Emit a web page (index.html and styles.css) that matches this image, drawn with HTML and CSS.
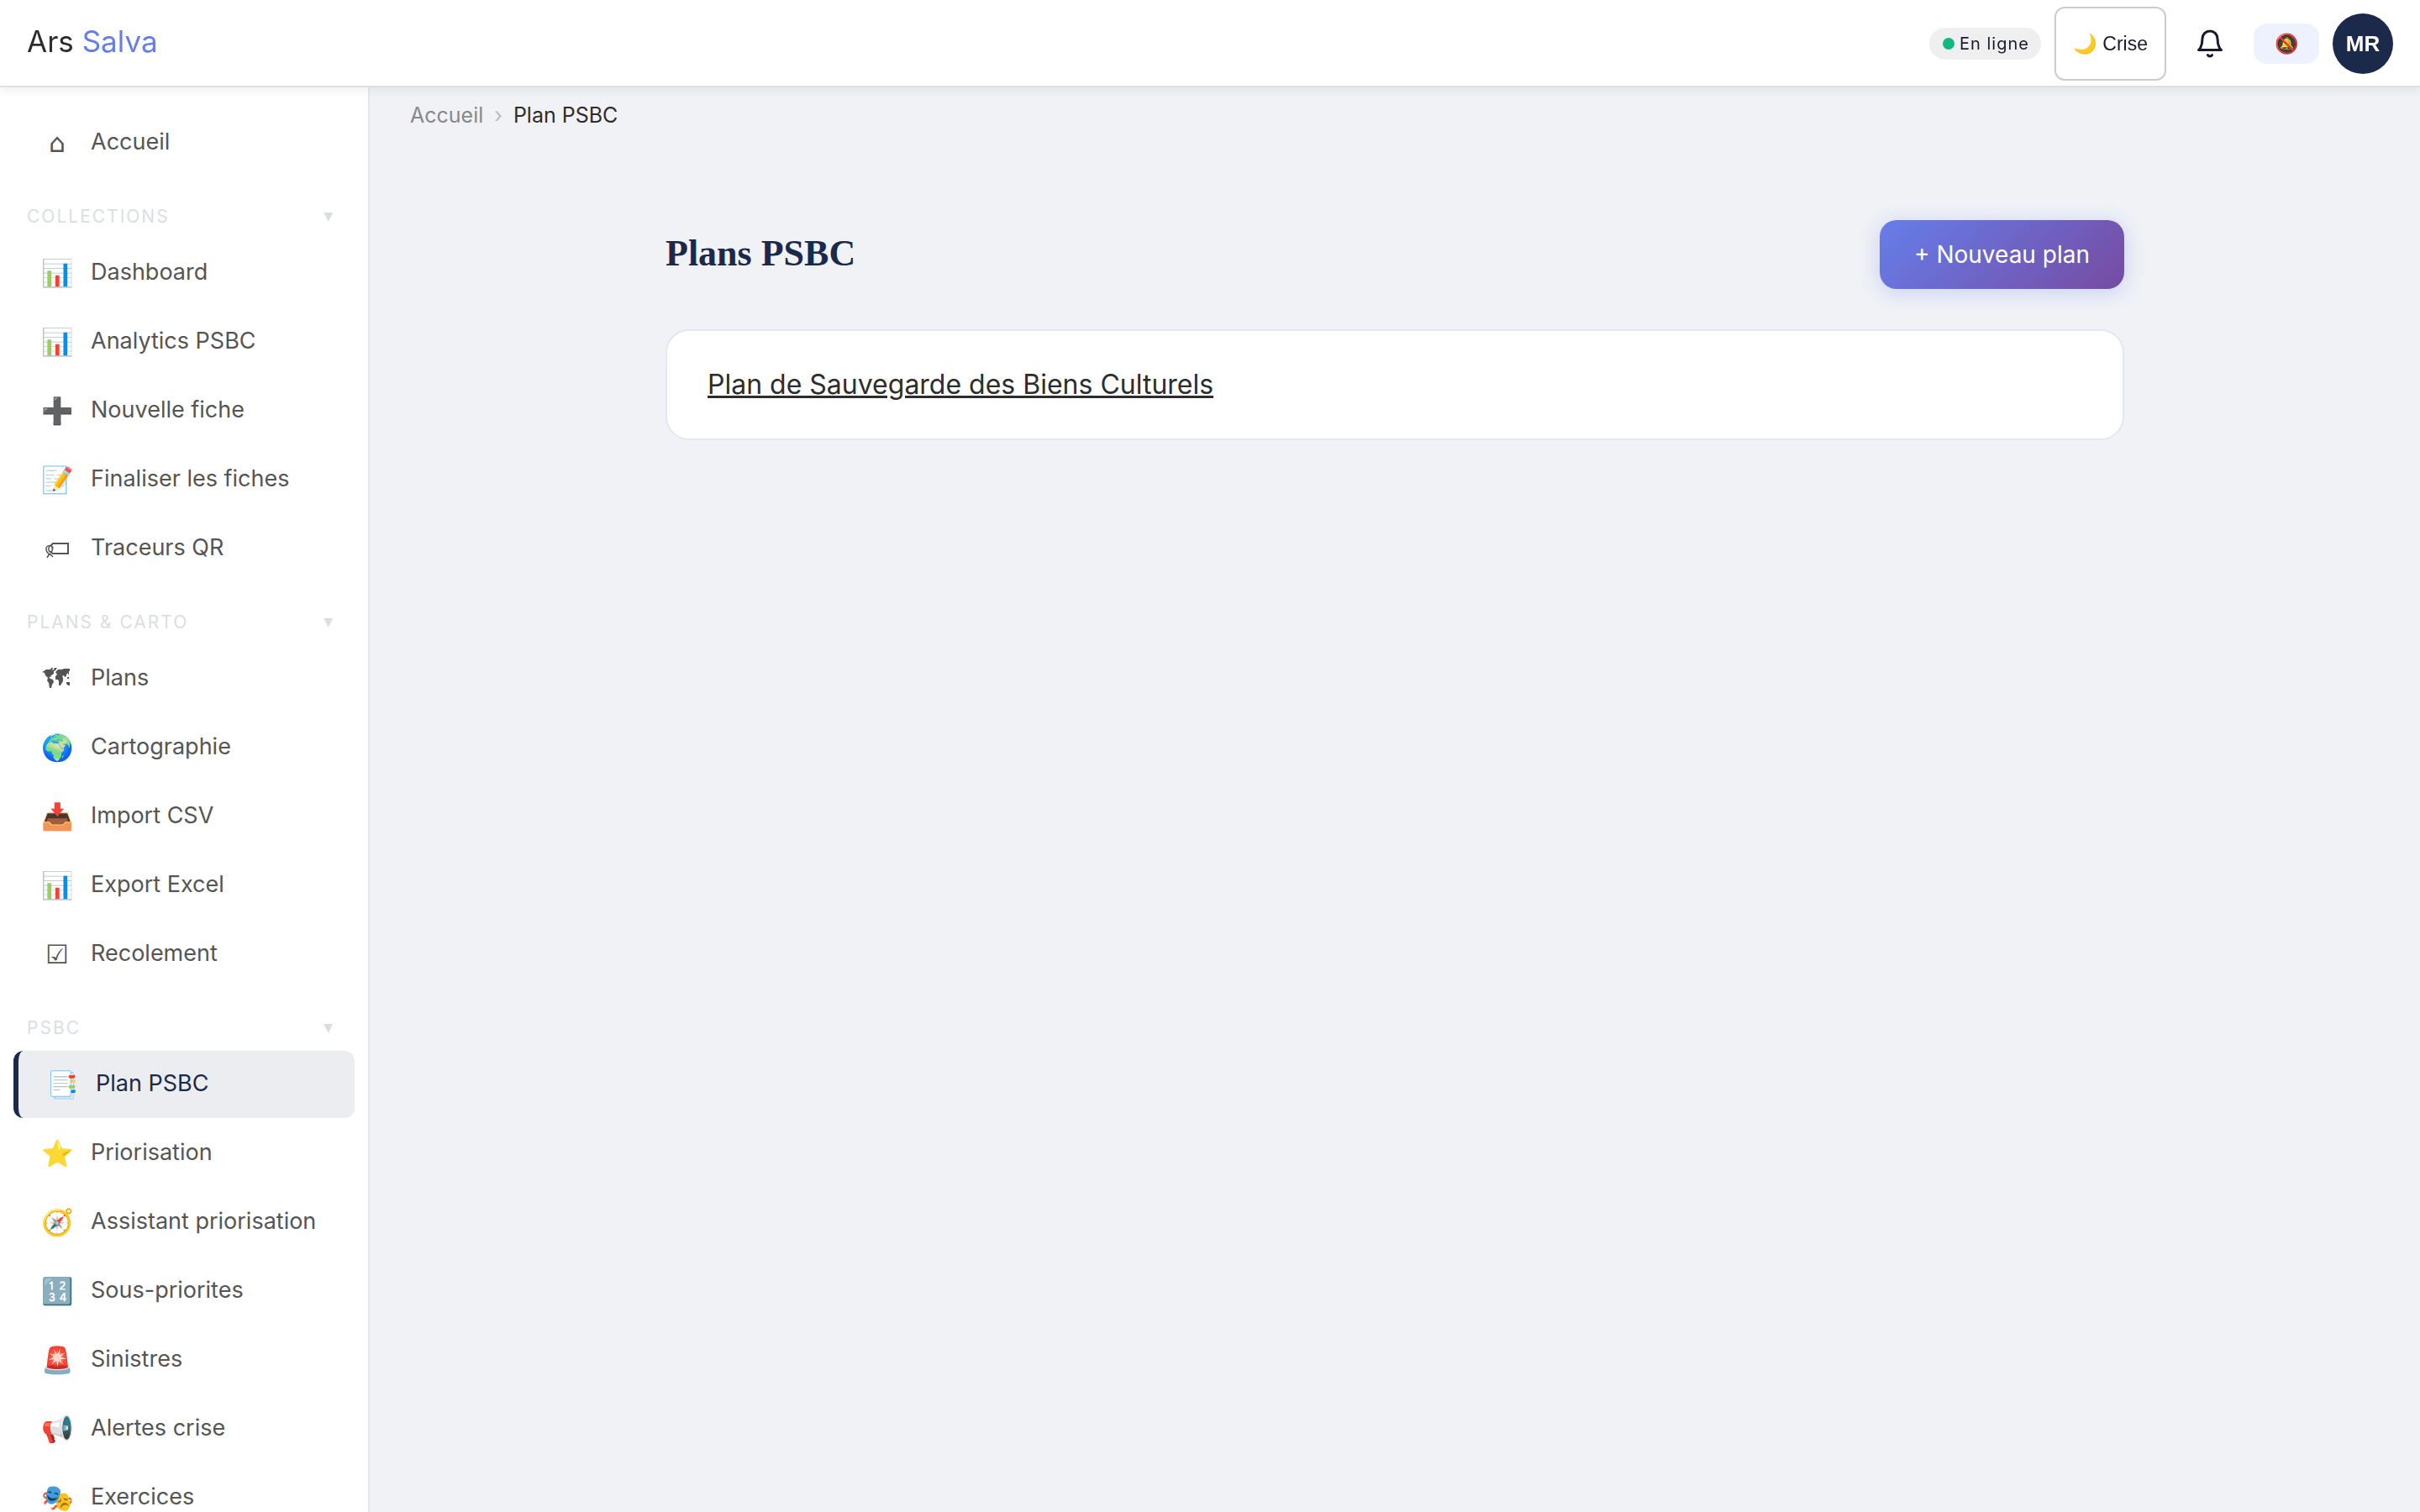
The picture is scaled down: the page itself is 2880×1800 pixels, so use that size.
FILE: index.html
```html
<!DOCTYPE html>
<html lang="fr">
<head>
<meta charset="utf-8">
<meta name="viewport" content="width=device-width, initial-scale=1">
<title>Plans PSBC – Ars Salva</title>
<link rel="stylesheet" href="styles.css">
</head>
<body>
<header class="topbar">
  <a class="brand" href="#">Ars <span class="brand-accent">Salva</span></a>
  <div class="topbar-actions">
    <button class="status" type="button"><span class="status-dot"></span>En ligne</button>
    <button class="crisis" type="button">🌙 Crise</button>
    <button class="bell" type="button" aria-label="Notifications">
      <svg viewBox="0 0 24 24" fill="none" stroke="currentColor" stroke-width="2" stroke-linecap="round" stroke-linejoin="round" aria-hidden="true"><path d="M18 8A6 6 0 0 0 6 8c0 7-3 9-3 9h18s-3-2-3-9"/><path d="M13.73 21a2 2 0 0 1-3.46 0"/></svg>
    </button>
    <button class="mute" type="button" aria-label="Notifications désactivées">🔕</button>
    <button class="avatar" type="button">MR</button>
  </div>
</header>
<div class="shell">
  <nav class="sidebar" aria-label="Navigation principale">
    <a class="nav-item" href="#"><span class="nav-icon">⌂</span>Accueil</a>

    <button class="section" type="button">COLLECTIONS<span class="caret">▼</span></button>
    <a class="nav-item" href="#"><span class="nav-icon">📊</span>Dashboard</a>
    <a class="nav-item" href="#"><span class="nav-icon">📊</span>Analytics PSBC</a>
    <a class="nav-item" href="#"><span class="nav-icon">➕</span>Nouvelle fiche</a>
    <a class="nav-item" href="#"><span class="nav-icon">📝</span>Finaliser les fiches</a>
    <a class="nav-item" href="#"><span class="nav-icon"><svg viewBox="0 0 40 40" fill="none" stroke="currentColor" aria-hidden="true"><path stroke-width="2" d="M12 17l3-3h18v12H15l-3-2"/><path stroke-width="1.5" d="M15 20c0-5-8-4-8 0 0 3 1 5 3 6M11 17c-2 3-1 7 1 7 3 0 3-5 1-7M11 26l-3 5M11 26l4 4"/></svg></span>Traceurs QR</a>

    <button class="section" type="button">PLANS &amp; CARTO<span class="caret">▼</span></button>
    <a class="nav-item" href="#"><span class="nav-icon"><svg viewBox="0 0 40 40" fill="currentColor" aria-hidden="true"><path d="M4 11l3-2h5l1-2h2l-1 3 2-1 1-2h3l-2 3-2 1v3l-3 2-1 2h-2l2 2 3 1 1 3-2 3-1 4h-2l-1-6-2-3 1-3-3-3-1-3-3-1zM18 12l3-3h5l2-1h7v3h-1v4h-1v-2l-2 2v2l-2 1-1-2-2 1 1 2v4l-2 3-1 2h-2v-5l-1-2h-3v-4l2-2zM32 18h2v2h-2zM31 24h4v4h-2l-2-2z"/></svg></span>Plans</a>
    <a class="nav-item" href="#"><span class="nav-icon">🌍</span>Cartographie</a>
    <a class="nav-item" href="#"><span class="nav-icon">📥</span>Import CSV</a>
    <a class="nav-item" href="#"><span class="nav-icon">📊</span>Export Excel</a>
    <a class="nav-item" href="#"><span class="nav-icon">☑</span>Recolement</a>

    <button class="section" type="button">PSBC<span class="caret">▼</span></button>
    <a class="nav-item active" href="#" aria-current="page"><span class="nav-icon">📑</span>Plan PSBC</a>
    <a class="nav-item" href="#"><span class="nav-icon">⭐</span>Priorisation</a>
    <a class="nav-item" href="#"><span class="nav-icon">🧭</span>Assistant priorisation</a>
    <a class="nav-item" href="#"><span class="nav-icon">🔢</span>Sous-priorites</a>
    <a class="nav-item" href="#"><span class="nav-icon">🚨</span>Sinistres</a>
    <a class="nav-item" href="#"><span class="nav-icon">📢</span>Alertes crise</a>
    <a class="nav-item" href="#"><span class="nav-icon">🎭</span>Exercices</a>
  </nav>
  <main class="main">
    <nav class="breadcrumb" aria-label="Fil d'Ariane">
      <a href="#">Accueil</a><span class="crumb-sep">›</span><span class="crumb-current">Plan PSBC</span>
    </nav>
    <div class="content">
      <div class="page-head">
        <h1>Plans PSBC</h1>
        <button class="primary" type="button">+ Nouveau plan</button>
      </div>
      <section class="card">
        <a class="plan-link" href="#">Plan de Sauvegarde des Biens Culturels</a>
      </section>
    </div>
  </main>
</div>
</body>
</html>
```
FILE: styles.css
```css
* {
  box-sizing: border-box;
}

body {
  margin: 0;
  height: 100vh;
  overflow: hidden;
  display: flex;
  flex-direction: column;
  background: #f0f2f6;
  color: #2d2d2d;
  font-family: Inter, "Liberation Sans", sans-serif;
  font-size: 32px;
}

a {
  color: inherit;
  text-decoration: none;
}

button {
  border: 0;
  background: none;
  color: inherit;
  padding: 0;
  cursor: pointer;
}

.topbar {
  position: relative;
  z-index: 1;
  flex: none;
  display: flex;
  align-items: center;
  justify-content: space-between;
  height: 104px;
  padding: 0 32px;
  background: #fff;
  border-bottom: 2px solid #e0e0e0;
  box-shadow: 0 2px 12px rgba(0, 0, 0, 0.08);
}

.brand {
  padding-bottom: 4px;
  font-size: 35px;
}

.brand-accent {
  color: #667eea;
}

.topbar-actions {
  display: flex;
  align-items: center;
  gap: 16px;
  padding-top: 2px;
  color: #1a1a2e;
}

.status {
  display: flex;
  align-items: center;
  gap: 6px;
  height: 38px;
  padding: 0 14px 0 16px;
  border-radius: 19px;
  background: #efefef;
  font: 20px Inter, sans-serif;
  letter-spacing: 1px;
}

.status-dot {
  width: 14px;
  height: 14px;
  border-radius: 50%;
  background: #10b981;
}

.crisis {
  height: 88px;
  padding: 0 20px;
  border: 2px solid #ccc;
  border-radius: 12px;
  background: #fff;
  font: 23px "Liberation Sans", sans-serif;
}

.bell {
  display: grid;
  place-items: center;
  width: 72px;
  height: 72px;
}

.bell svg {
  width: 36px;
  height: 36px;
}

.mute {
  width: 78px;
  height: 48px;
  border-radius: 16px;
  background: #eef2ff;
  font: 23px Inter, sans-serif;
}

.avatar {
  width: 72px;
  height: 72px;
  border-radius: 50%;
  background: #1b2a4a;
  color: #fff;
  font: bold 26px "Liberation Sans", sans-serif;
}

.shell {
  flex: 1;
  min-height: 0;
  display: flex;
}

.sidebar {
  flex: none;
  width: 440px;
  padding: 26px 16px;
  overflow: hidden auto;
  scrollbar-width: none;
  background: #fff;
  border-right: 2px solid #e4e6ee;
}

.nav-item {
  display: flex;
  align-items: center;
  gap: 20px;
  height: 80px;
  margin-bottom: 2px;
  padding: 0 32px 4px;
  border-radius: 12px;
  color: #555;
  font-size: 27px;
  white-space: nowrap;
}

.nav-item.active {
  border-left: 6px solid #1b2a4a;
  background: #ecedf1;
  color: #1b2a4a;
}

.nav-icon {
  width: 40px;
  padding-top: 4px;
  font-family: "DejaVu Sans", sans-serif;
  font-size: 31px;
  line-height: 40px;
  text-align: center;
}

.nav-icon svg {
  display: block;
  width: 40px;
  height: 40px;
}

.section {
  display: flex;
  align-items: center;
  justify-content: space-between;
  width: 100%;
  height: 40px;
  margin: 27px 0 8px;
  padding: 0 24px 0 16px;
  color: #dadee3;
  font: 21px Inter, sans-serif;
  letter-spacing: 2px;
}

.caret {
  font-family: "DejaVu Sans", sans-serif;
  font-size: 14px;
}

.main {
  flex: 1;
  min-width: 0;
}

.breadcrumb {
  display: flex;
  align-items: center;
  gap: 13px;
  height: 66px;
  padding: 0 48px;
  color: #888;
  font-size: 25px;
}

.crumb-sep {
  color: #bbb;
}

.crumb-current {
  color: #2d2d2d;
}

.content {
  max-width: 1864px;
  margin: 0 auto;
  padding: 92px 64px;
}

.page-head {
  display: flex;
  align-items: center;
  justify-content: space-between;
  margin-bottom: 48px;
}

h1 {
  margin: 0;
  padding-bottom: 4px;
  color: #1b2a4a;
  font: bold 44px "Liberation Serif", serif;
}

.primary {
  height: 82px;
  padding: 0 41px;
  border-radius: 20px;
  background: linear-gradient(135deg, #667eea, #764ba2);
  box-shadow: 0 4px 24px rgba(102, 126, 234, 0.3);
  color: #fff;
  font: 28px Inter, sans-serif;
}

.card {
  padding: 44px 48px;
  border: 2px solid #e2e8f0;
  border-radius: 28px;
  background: #fff;
  line-height: 40px;
}

.plan-link {
  font-size: 32px;
  text-decoration: underline;
}
```
